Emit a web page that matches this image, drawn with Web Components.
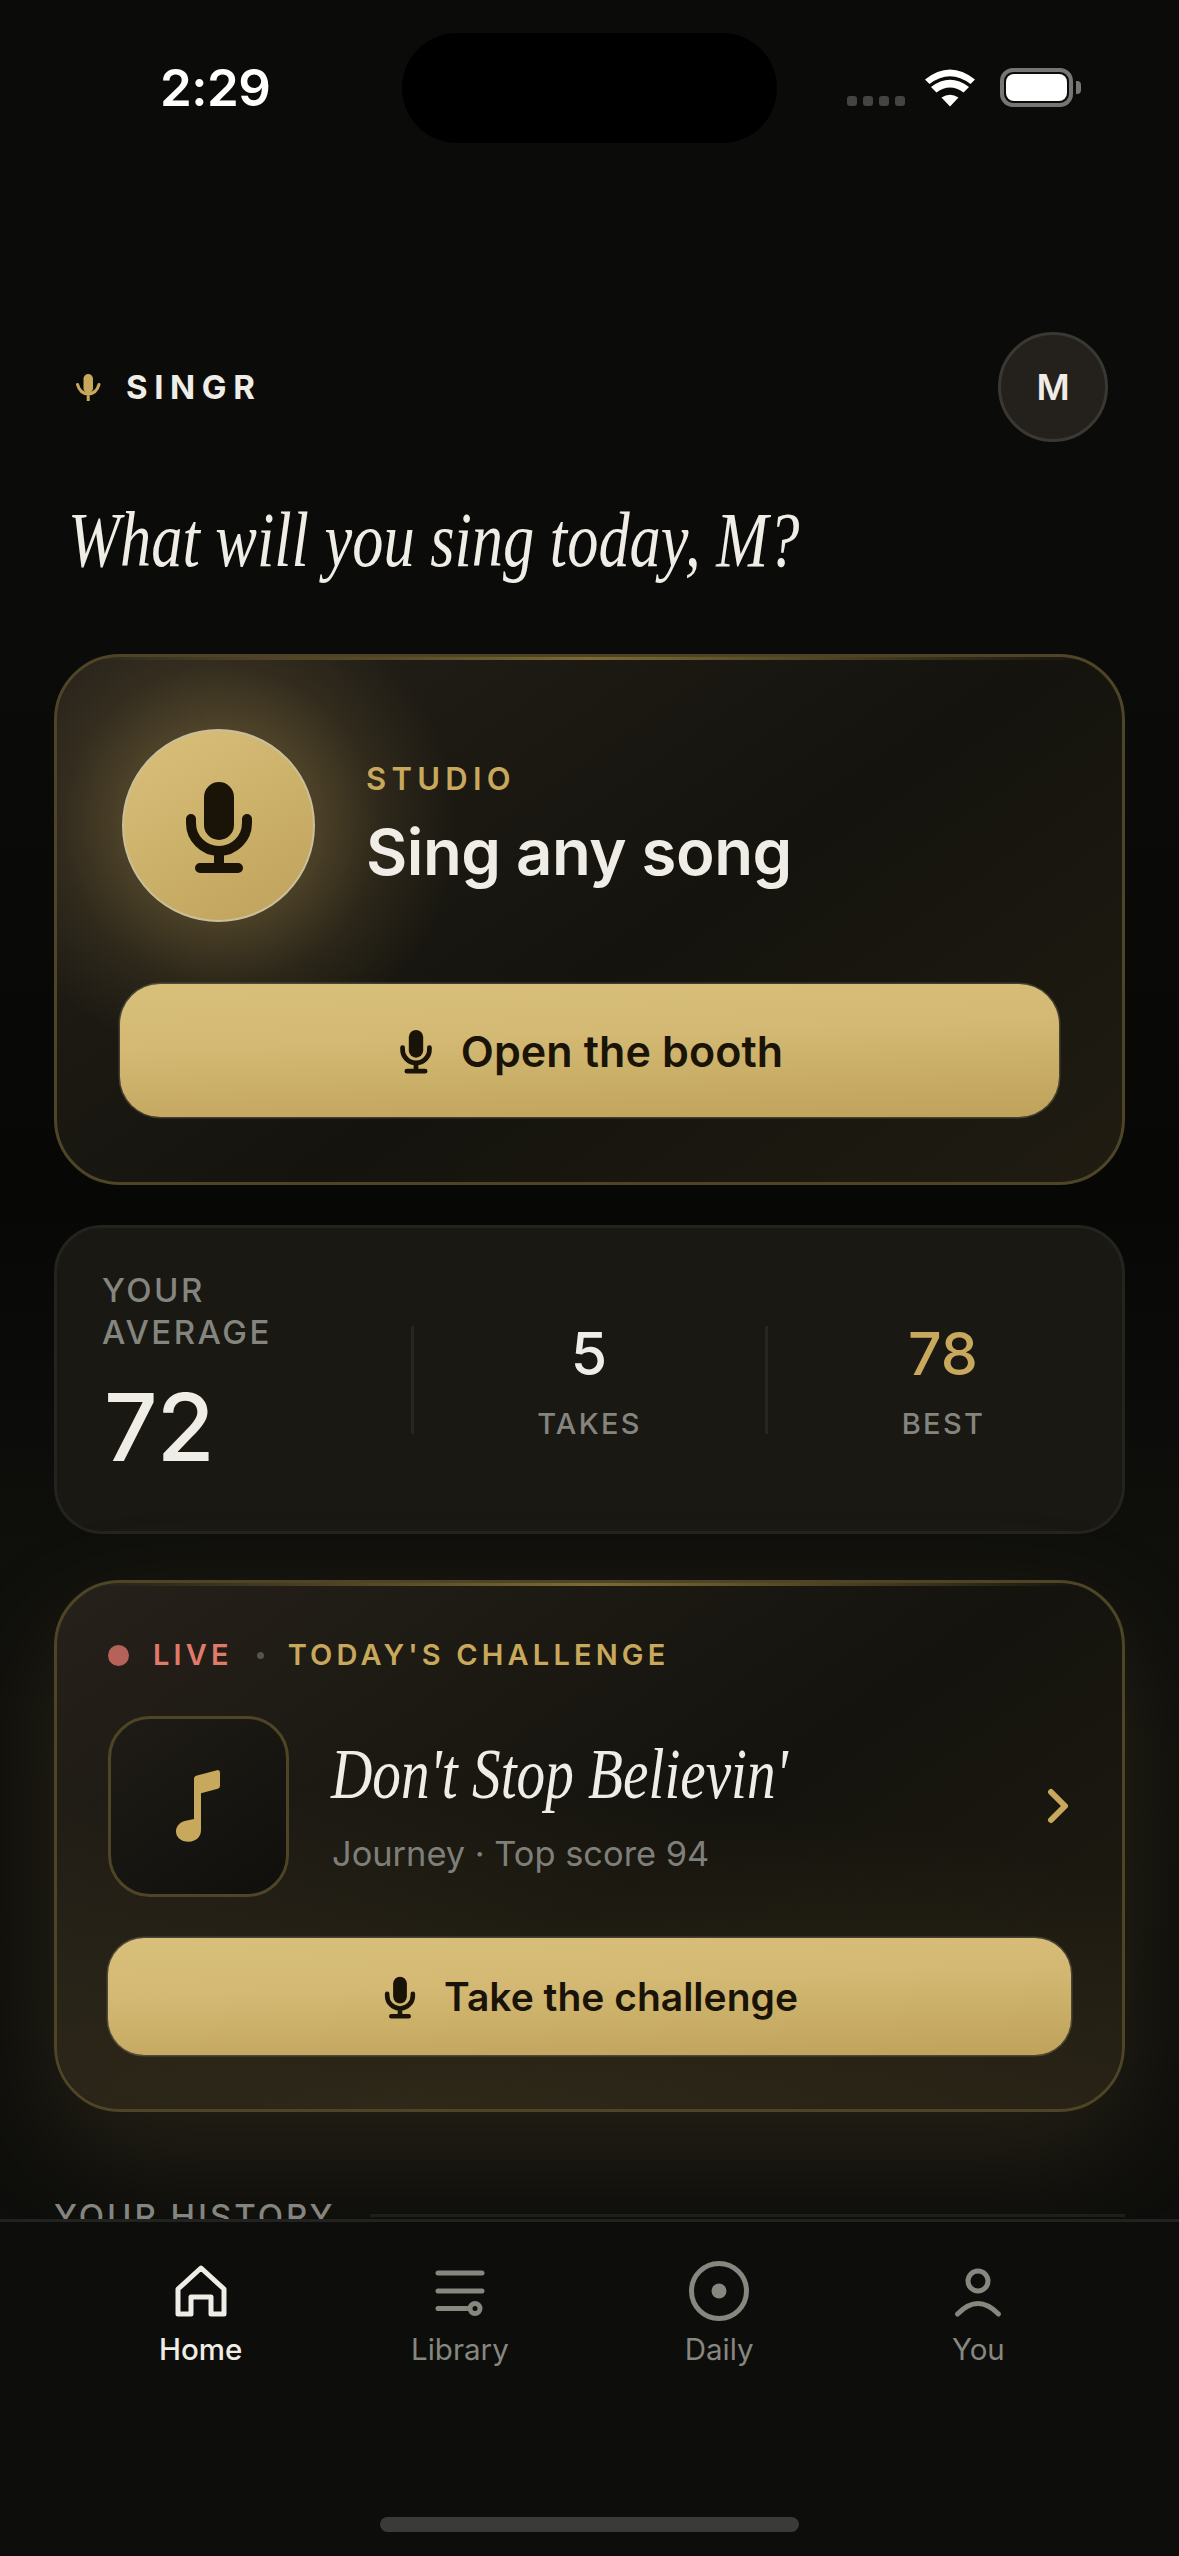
<!DOCTYPE html>
<html><head><meta charset="utf-8">
<style>
html,body{margin:0;padding:0;background:#0b0b09}
body{width:1179px;height:2556px;overflow:hidden;font-family:"Inter","Liberation Sans",sans-serif}
</style></head><body>
<template id="mic"><svg viewBox="0 0 96 96" width="100%" height="100%" style="display:block"><rect x="33" y="4" width="30" height="58" rx="15" fill="currentColor"/><path d="M20 41v4a28 28 0 0 0 56 0v-4M48 73v17M29 90h38" fill="none" stroke="currentColor" stroke-width="10" stroke-linecap="round"/></svg></template>
<singr-app></singr-app>
<script>
const micSvg=document.getElementById('mic').innerHTML;
function def(name,css,html){
  customElements.define(name,class extends HTMLElement{
    constructor(){super();const r=this.attachShadow({mode:'open'});
      r.innerHTML='<style>'+css+'</style>'+(typeof html==='function'?html(this):html);}
  });
}
def('status-bar',`
:host{display:flex;align-items:flex-start;height:171px;position:relative;color:#fff;box-sizing:border-box}
.t{margin:63px 0 0 160px;font:600 51px/50px Inter,sans-serif;letter-spacing:-.5px}
.island{position:absolute;left:402px;top:33px;width:375px;height:110px;border-radius:55px;background:#000}
.r{position:absolute;right:98px;top:68px;display:flex;align-items:flex-start}
.d{display:flex;gap:6px;margin:28px 20px 0 0}.d i{width:10px;height:10px;border-radius:3px;background:#444442}
.w{width:50px;height:38px;margin:1px 25px 0 0}
.b{width:73px;height:39px;box-sizing:border-box;border:4px solid #767674;border-radius:13px;padding:2px;}
.b i{display:block;height:100%;background:#fff;border-radius:8px}
.c{width:5px;height:13px;margin:13px 0 0 3px;background:#767674;border-radius:0 4px 4px 0}
`,`<div class="t">2:29</div><div class="island"></div><div class="r"><div class="d"><i></i><i></i><i></i><i></i></div>
<svg class="w" viewBox="0 0 50 38"><path d="M25 37.500l-8.500-9q8.500-5.500 17 0zM11.500 23.500l-5.500-5.500q19-14.500 38 0l-5.500 5.500q-13.500-10-27 0zM4.500 15L0 10.500q25-20 50 0L45.500 15Q25-.5 4.500 15z" fill="#fff"/></svg>
<div class="b"><i></i></div><div class="c"></div></div>`);

def('app-header',`
:host{display:flex;align-items:center;justify-content:space-between;padding:0 71px 0 72px;height:110px;margin-top:161px;color:#f0ede6}
.l{display:flex;align-items:center;gap:25px}
.m{width:26px;height:28px;color:#c8a85c;margin:0 0 0 3px}
.s{font:650 33px/40px Inter,sans-serif;letter-spacing:.2em}
.a{width:110px;height:110px;box-sizing:border-box;border-radius:50%;background:#24211c;border:3px solid #3a3833;display:flex;align-items:center;justify-content:center;font:600 36px/1 Inter,sans-serif}
`,`<div class="l"><svg class="m" viewBox="0 0 26 28"><rect x="8.500" y="1" width="9.500" height="19" rx="4.700" fill="currentColor"/><path d="M2.500 11.500Q5 20.500 13.200 21Q21.500 20.500 24 11.500M13.200 20v7.500" fill="none" stroke="currentColor" stroke-width="3" stroke-linecap="round"/></svg><div class="s"><slot></slot></div></div><div class="a"><slot name="a"></slot></div>`);

def('serif-line',`
:host{display:block;font-family:"Liberation Serif",serif;font-style:italic;color:#f0ede6;white-space:nowrap}
span{display:inline-block;transform-origin:0 50%;transform:scaleX(var(--sx,.8))}
`,`<span><slot></slot></span>`);

def('glow-card',`
:host{display:block;position:relative;box-sizing:border-box;border:3px solid #4e4426;border-radius:66px;background:linear-gradient(145deg,#26211a 0%,#14130d 55%,#201c12 100%);}
:host::before{content:"";position:absolute;left:30px;right:30px;top:0;height:3px;background:linear-gradient(90deg,transparent,#7d6a35 50%,transparent)}
`,`<slot></slot>`);

def('gold-button',`
:host{display:flex;align-items:center;justify-content:center;box-sizing:border-box;background:linear-gradient(178deg,#d9c07a 0%,#d3b973 40%,#bfa25c 100%);color:#1a1408;font-weight:600;box-shadow:0 0 0 1.500px rgba(255,240,200,.18)}
.m{display:block}
`,h=>`<span class="m" style="width:${h.getAttribute('icon')}px;height:${h.getAttribute('icon')}px;margin-right:${h.getAttribute('gap')}px">${micSvg}</span><slot></slot>`);

def('studio-card',`
:host{display:block;margin:0 54px}
.wrap{padding:72px 63px 63px;position:relative;height:525px;box-sizing:border-box;border-radius:64px;background:radial-gradient(circle 235px at 165px 168px,rgba(200,168,92,.27) 41%,rgba(200,168,92,.1) 68%,rgba(200,168,92,0) 100%)}
.top{display:flex;align-items:center;gap:51px;height:193px;margin-left:2px}
.o{width:193px;height:193px;box-sizing:border-box;border-radius:50%;background:linear-gradient(150deg,#d9c07a,#bfa25c);border:2px solid #c9bf98;color:#1a1408;display:flex;align-items:center;justify-content:center}
.o span{width:96px;height:96px}
.k{font:600 31px/38px Inter,sans-serif;letter-spacing:.17em;color:#c8a85c;margin-bottom:16px;margin-top:-2px}
.h{font:600 63.500px/76px Inter,sans-serif;color:#f0ede6;letter-spacing:-.5px}
gold-button{margin:62px 0 0 0;height:133px;border-radius:40px;font-size:43px;letter-spacing:.1px;padding-right:3px}
`,`<glow-card><div class="wrap"><div class="top"><div class="o"><span>${micSvg}</span></div><div><div class="k">STUDIO</div><div class="h">Sing any song</div></div></div><gold-button icon="46" gap="22">Open the booth</gold-button></div></glow-card>`);

def('stat-cell',`
:host{flex:0 0 354px;display:flex;flex-direction:column;align-items:center;justify-content:center;height:108px;position:relative}
:host::before{content:"";position:absolute;left:0;top:0;bottom:0;width:3px;background:#272622}
.v{font:500 59px/60px Inter,sans-serif;color:var(--c,#f0ede6);margin-top:6px;padding-left:2px}
.l{font:500 29px/36px Inter,sans-serif;letter-spacing:.08em;color:#85857f;margin-top:22px;padding-left:3px}
`,h=>`<div class="v"><slot></slot></div><div class="l">${h.getAttribute('label')}</div>`);

def('stats-card',`
:host{display:flex;align-items:center;box-sizing:border-box;margin:40px 54px 0;height:309px;border:3px solid #24231f;border-radius:48px;background:#1a1813;padding:0 0 0 45px}
.a{flex:0 0 309px;align-self:flex-start;padding-top:41px}
.l{font:500 33px/42px Inter,sans-serif;letter-spacing:.075em;color:#85857f}
.n{font:500 94px/100px Inter,sans-serif;color:#f0ede6;margin:24px 0 0 2px;letter-spacing:-1px}
`,`<div class="a"><div class="l">YOUR<br>AVERAGE</div><div class="n">72</div></div><slot></slot>`);

def('challenge-card',`
:host{display:block;margin:46px 54px 0;box-shadow:0 40px 120px rgba(200,168,92,.13);border-radius:66px}
.wrap{padding:54px 51px 0;height:526px;box-sizing:border-box;border-radius:64px;background:radial-gradient(ellipse 1100px 320px at 30% 100%,rgba(200,168,92,.14),transparent)}
.live{display:flex;align-items:center;font:600 29px/36px Inter,sans-serif;letter-spacing:.143em;height:36px}
.dot{width:21px;height:21px;border-radius:50%;background:#b5635a;margin-right:24px}
.lv{color:#e07a6a}
.sep{width:7px;height:7px;border-radius:50%;background:#55534c;margin:0 24px 0 24px}
.td{color:#c8a85c}
.row{display:flex;align-items:center;margin-top:43px;height:180px}
.art{flex:none;width:181px;height:181px;box-sizing:border-box;border:3px solid #4e4426;border-radius:42px;background:linear-gradient(145deg,#1f1c16,#100f0c);display:flex;align-items:center;justify-content:center}
.art svg{width:60px;height:80px;display:block}
.mid{flex:1;margin-left:42px}
.tt{font-size:72px;line-height:76px;--sx:.795;margin-top:0}
.sub{font:400 34.400px/44px Inter,sans-serif;color:#7f7f7a;margin-top:20px;margin-left:1px}
.ch{width:22px;height:36px;display:block;margin-right:2px}
gold-button{margin-top:42px;height:117px;border-radius:36px;font-size:39px;padding-right:3px}
`,`<glow-card><div class="wrap"><div class="live"><span class="dot"></span><span class="lv">LIVE</span><span class="sep"></span><span class="td">TODAY'S CHALLENGE</span></div>
<div class="row"><div class="art"><svg viewBox="0 0 60 80"><path d="M25 13q0-3 3-3.600L48 4.200q3-.6 3 2.400V20q0 2.200-2.200 2.700L32 27.300V64c0 7-5 11.700-12.500 11.700C12 75.700 7 71 7 65.500c0-6 4.500-10 11-11l7-1.500z" fill="#c8a85c"/></svg></div><div class="mid"><serif-line class="tt">Don't Stop Believin'</serif-line><div class="sub">Journey · Top score 94</div></div><svg class="ch" viewBox="0 0 22 36"><path d="M4 4l14 14L4 32" fill="none" stroke="#c8a85c" stroke-width="6" stroke-linecap="round" stroke-linejoin="round"/></svg></div>
<gold-button icon="44" gap="22">Take the challenge</gold-button></div></glow-card>`);

def('section-head',`
:host{display:flex;align-items:center;gap:34px;margin:84px 54px 0;font:500 33px/40px Inter,sans-serif;letter-spacing:.09em;color:#85857f}
i{flex:1;height:3px;background:#1e1e1b;margin-bottom:2px}
`,`<slot></slot><i></i>`);

def('nav-item',`
:host{display:flex;flex-direction:column;align-items:center;color:var(--c,#87877f);font:400 29.500px/36px Inter,sans-serif}
span{display:block;width:72px;height:72px}
div{margin-top:4px}
`,h=>`<span>${h.innerHTML}</span><div>${h.getAttribute('label')}</div>`);

def('bottom-nav',`
:host{position:absolute;left:0;right:0;bottom:0;height:337px;box-sizing:border-box;background:#0d0d0b;border-top:3px solid #222220;padding:33px 71px 0;display:grid;grid-template-columns:repeat(4,1fr);align-items:start;justify-items:center}
.bar{position:absolute;left:380px;top:295px;width:419px;height:15px;border-radius:8px;background:#3a3a38}
`,`<slot></slot><div class="bar"></div>`);

const sw='fill="none" stroke="currentColor" stroke-width="5" stroke-linecap="round" stroke-linejoin="round"';
def('singr-app',`
:host{display:block;width:1179px;height:2556px;position:relative;overflow:hidden;background:linear-gradient(180deg,#0b0b09 0,#0b0b09 640px,#070706 1200px,#0f0f0c 1560px,#0d0d0b 100%)}
.hd{margin:48px 0 0 68px;font-size:78px;line-height:100px;height:100px}
.sp{height:64px}
`,`<status-bar></status-bar>
<app-header>SINGR<span slot="a">M</span></app-header>
<serif-line class="hd">What will you sing today, M?</serif-line>
<div class="sp"></div>
<studio-card></studio-card>
<stats-card><stat-cell label="TAKES">5</stat-cell><stat-cell label="BEST" style="--c:#c8a85c">78</stat-cell></stats-card>
<challenge-card></challenge-card>
<section-head>YOUR HISTORY</section-head>
<bottom-nav>
<nav-item label="Home" style="--c:#f0ede6;font-weight:500"><svg viewBox="0 0 72 72" width="72" height="72" ${sw}><path d="M36 13L13 34v25h13V42h20v17h13V34z"/></svg></nav-item>
<nav-item label="Library"><svg viewBox="0 0 72 72" width="72" height="72" ${sw}><path d="M14 18h44M14 36h44M14 53.500h29"/><circle cx="51" cy="53.500" r="5"/></svg></nav-item>
<nav-item label="Daily"><svg viewBox="0 0 72 72" width="72" height="72" ${sw}><circle cx="36" cy="36" r="27.500"/><circle cx="36" cy="36" r="7.500" fill="currentColor" stroke="none"/></svg></nav-item>
<nav-item label="You"><svg viewBox="0 0 72 72" width="72" height="72" ${sw}><circle cx="36" cy="26" r="10"/><path d="M15.500 59Q36 38 56.500 59"/></svg></nav-item>
</bottom-nav>`);
</script>
</body></html>
